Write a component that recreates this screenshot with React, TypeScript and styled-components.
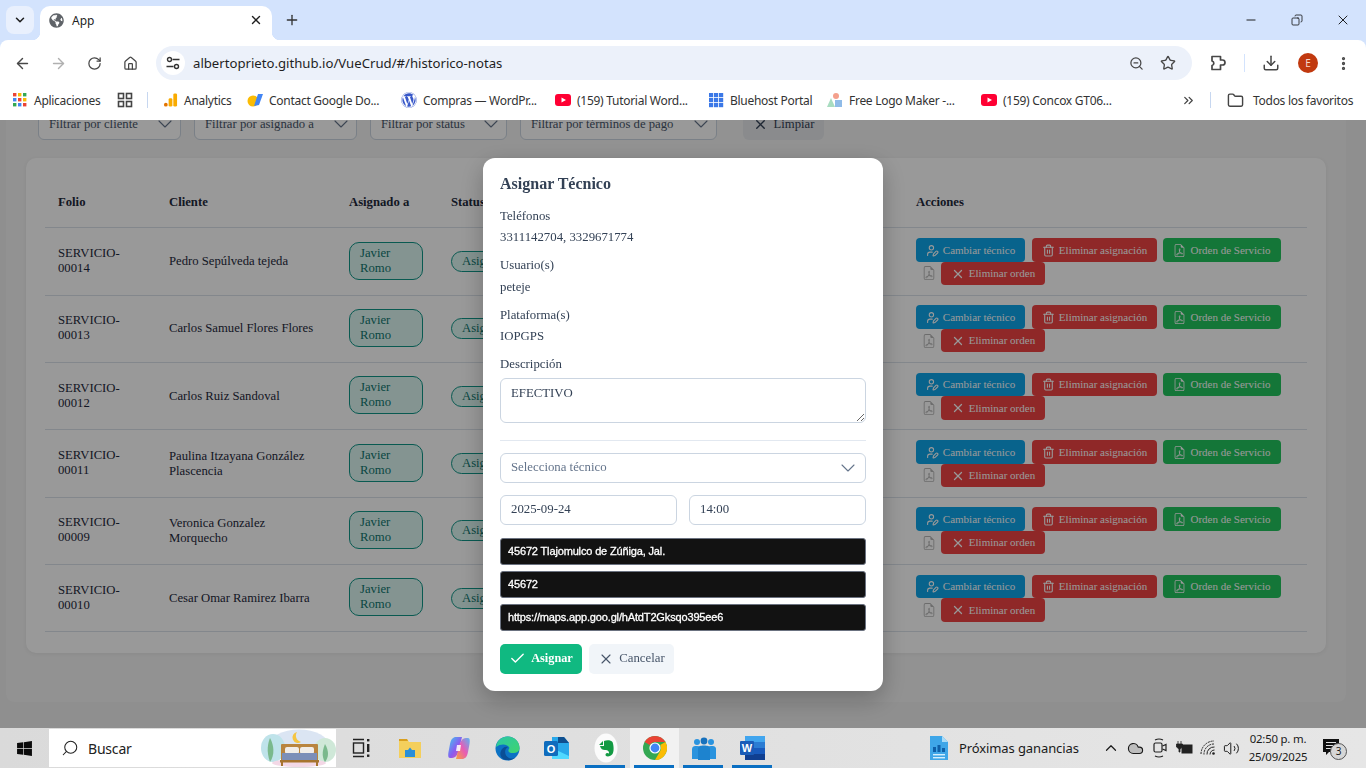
import React from "react";
import styled, { createGlobalStyle } from "styled-components";
import {
  ArrowLeft,
  ArrowRight,
  Check,
  ChevronDown,
  ChevronsRight,
  ChevronUp,
  Cloud,
  Copy,
  Download,
  EllipsisVertical,
  Folder,
  Home,
  Minus,
  Plus,
  RotateCw,
  Search,
  Star,
  Trash2,
  UserPen,
  Volume2,
  X,
  ZoomOut,
} from "lucide-react";
import { BsFileEarmarkPdf } from "react-icons/bs";
import { FaWordpress, FaGlobeAmericas, FaWindows } from "react-icons/fa";

const GlobalStyle = createGlobalStyle`
  html, body {
    margin: 0;
    padding: 0;
    overflow: hidden;
  }
  *, *:before, *:after {
    box-sizing: border-box;
  }
  body {
    font-family: "Liberation Serif", "Times New Roman", serif;
    color: #1e293b;
  }
`;

const UI_FONT = `"Noto Sans", "Open Sans", sans-serif`;

const Screen = styled.div`
  width: 1366px;
  height: 768px;
  display: flex;
  flex-direction: column;
  overflow: hidden;
  background: #d3e3fd;
`;

/* chrome: tabs */
const TabStrip = styled.div`
  height: 40px;
  flex: none;
  display: flex;
  align-items: flex-end;
  padding-left: 6px;
  font-family: ${UI_FONT};
  background: #d3e3fd;
`;

const TabMenu = styled.div`
  width: 28px;
  height: 28px;
  margin-bottom: 6px;
  border-radius: 8px;
  background: #e9f0fd;
  display: flex;
  align-items: center;
  justify-content: center;
  color: #1f1f1f;
`;

const Tab = styled.div`
  position: relative;
  width: 232px;
  height: 34px;
  margin-left: 6px;
  padding: 0 9px 6px;
  background: #fff;
  border-radius: 10px 10px 0 0;
  display: flex;
  align-items: center;
  gap: 8px;
  font-size: 12px;
  color: #1f1f1f;
  span {
    flex: 1;
  }
  &::before,
  &::after {
    content: "";
    position: absolute;
    bottom: 0;
    width: 8px;
    height: 8px;
  }
  &::before {
    left: -8px;
    background: radial-gradient(circle at 0 0, transparent 8px, #fff 8.5px);
  }
  &::after {
    right: -8px;
    background: radial-gradient(circle at 100% 0, transparent 8px, #fff 8.5px);
  }
`;

const NewTab = styled.div`
  margin: 0 0 7px 12px;
  width: 18px;
  height: 26px;
  display: flex;
  align-items: center;
  color: #333;
`;

const WindowButtons = styled.div`
  margin-left: auto;
  height: 40px;
  display: flex;
  color: #111;
`;

const WindowButton = styled.div`
  width: 46px;
  display: flex;
  align-items: center;
  justify-content: center;
`;

/* chrome: toolbar */
const Toolbar = styled.div`
  height: 45px;
  flex: none;
  display: flex;
  padding-top: 6px;
  background: #fff;
  border-radius: 8px 8px 0 0;
  font-family: ${UI_FONT};
  color: #474747;
`;

const NavButton = styled.div<{ $w: number; $muted?: boolean }>`
  width: ${(p) => p.$w}px;
  height: 34px;
  flex: none;
  display: flex;
  align-items: center;
  justify-content: center;
  color: ${(p) => (p.$muted ? "#b0b0b0" : "#474747")};
`;

const Omnibox = styled.div`
  width: 1036px;
  height: 34px;
  margin-left: 9px;
  padding-left: 5px;
  flex: none;
  border-radius: 17px;
  background: #ecf1fa;
  display: flex;
  align-items: center;
`;

const SiteInfo = styled.div`
  width: 24px;
  height: 24px;
  border-radius: 50%;
  background: #fff;
  display: flex;
  align-items: center;
  justify-content: center;
`;

const Url = styled.div`
  margin-left: 8px;
  font-size: 13.17px;
  color: #1f1f1f;
  flex: 1;
`;

const ToolSep = styled.div`
  width: 1px;
  height: 18px;
  margin: 8px 0;
  background: #d3e3fd;
  flex: none;
`;

const Avatar = styled.div`
  width: 20px;
  height: 20px;
  margin-left: 2px;
  border-radius: 50%;
  background: #c1390f;
  color: #f5d8cc;
  font-size: 10px;
  display: flex;
  align-items: center;
  justify-content: center;
  flex: none;
`;

/* chrome: bookmarks */
const Bookmarks = styled.div`
  height: 35px;
  flex: none;
  display: flex;
  align-items: center;
  padding: 0 0 5px 12px;
  background: #fff;
  font-family: ${UI_FONT};
  font-size: 12px;
  color: #333;
  letter-spacing: -0.28px;
`;

const Bookmark = styled.div<{ $w: number; $gap?: number }>`
  width: ${(p) => p.$w}px;
  flex: none;
  display: flex;
  align-items: center;
  gap: ${(p) => p.$gap ?? 6}px;
  white-space: nowrap;
  svg {
    flex: none;
  }
`;

const BookmarkSep = styled.div`
  width: 1px;
  height: 16px;
  background: #c7d7f0;
  flex: none;
`;

/* the app under the dialog */
const Page = styled.div`
  position: relative;
  flex: 1;
  overflow: hidden;
  background: #eeeeee;
  padding: 0 20px 0 6px;
`;

const Panel = styled.div`
  height: 592px;
  background: #f3f3f3;
  padding: 0 20px;
  border-radius: 0 0 8px 8px;
`;

const Filters = styled.div`
  margin-top: -10px;
  padding-left: 12px;
  height: 30px;
  display: flex;
  gap: 13px;
`;

const FilterSelect = styled.div<{ $w: number }>`
  width: ${(p) => p.$w}px;
  height: 30px;
  padding: 0 3px 2px 10px;
  border: 1px solid #cbd5e1;
  border-radius: 6px;
  background: #fff;
  display: flex;
  align-items: center;
  justify-content: space-between;
  font-size: 12.7px;
  color: #475569;
`;

const ClearButton = styled.div`
  margin-left: 13px;
  width: 81px;
  height: 30px;
  padding-bottom: 2px;
  border-radius: 6px;
  background: #e6e8ec;
  display: flex;
  align-items: center;
  justify-content: center;
  gap: 6px;
  font-size: 12.7px;
  color: #334155;
`;

const Card = styled.div`
  margin-top: 18px;
  height: 495px;
  padding: 19px;
  background: #fff;
  border-radius: 10px;
  box-shadow: 0 1px 4px rgba(0, 0, 0, 0.06);
`;

const Row = styled.div<{ $head?: boolean }>`
  display: grid;
  grid-template-columns: 111px 180px 102px 465px 1fr;
  align-items: center;
  height: ${(p) => (p.$head ? "51.4px" : "67.33px")};
  border-bottom: 1px solid #dbe2ea;
  font-size: 12.7px;
  line-height: 15px;
  font-weight: ${(p) => (p.$head ? 700 : 400)};
`;

const Cell = styled.div`
  padding: 0 13px;
`;

const FolioCell = styled(Cell)`
  margin-bottom: 1px;
`;

const TechPill = styled.div`
  width: 74px;
  margin-bottom: 1.5px;
  padding: 3px 10px;
  border: 1px solid #0f9688;
  border-radius: 10px;
  background: #dcf7f2;
  color: #0f766e;
`;

const StatusPill = styled.div`
  display: inline-block;
  padding: 2px 10px;
  border: 1px solid #0f9688;
  border-radius: 11px;
  background: #dcf7f2;
  color: #0f766e;
`;

const Actions = styled.div`
  display: flex;
  flex-wrap: wrap;
  align-items: center;
`;

const ActionButton = styled.div<{ $bg: string; $w: number; $ml?: number }>`
  width: ${(p) => p.$w}px;
  margin-left: ${(p) => p.$ml ?? 0}px;
  height: 23.5px;
  padding-top: 0.5px;
  border-radius: 4px;
  background: ${(p) => p.$bg};
  color: #fff;
  font-size: 11px;
  display: flex;
  align-items: center;
  justify-content: center;
  gap: 4px;
  white-space: nowrap;
`;

const PdfGhost = styled.div`
  width: 25px;
  height: 23.5px;
  display: flex;
  align-items: center;
  justify-content: center;
  color: #b5b5b5;
`;

/* dialog */
const Overlay = styled.div`
  position: absolute;
  inset: 0;
  background: rgba(0, 0, 0, 0.4);
  backdrop-filter: blur(0.6px);
  display: flex;
  align-items: center;
  justify-content: center;
`;

const Modal = styled.div`
  width: 400px;
  height: 533px;
  padding: 17.5px 17px 17px;
  background: #fff;
  border-radius: 12px;
  box-shadow: 0 8px 24px rgba(0, 0, 0, 0.25);
  display: flex;
  flex-direction: column;
  font-size: 12.8px;
  line-height: 15px;
  color: #334155;
`;

const Title = styled.div`
  font-size: 16px;
  line-height: 18px;
  font-weight: 700;
  margin-bottom: 16px;
`;

const Field = styled.div<{ $gap: number }>`
  margin-bottom: ${(p) => p.$gap}px;
`;

const Value = styled.div`
  margin-top: 6.33px;
`;

const Description = styled.textarea`
  display: block;
  width: 100%;
  height: 45px;
  margin-top: 6px;
  padding: 7px 10px;
  border: 1px solid #cbd5e1;
  border-radius: 6px;
  font: 12.8px/15px "Liberation Serif", serif;
  color: #334155;
  outline: none;
`;

const Divider = styled.div`
  height: 1px;
  margin: 17px 0 12px;
  background: #e2e8f0;
  flex: none;
`;

const Control = styled.div<{ $placeholder?: boolean }>`
  flex: 1;
  height: 30px;
  padding: 0 5px 0 10px;
  border: 1px solid #cbd5e1;
  border-radius: 6px;
  display: flex;
  align-items: center;
  justify-content: space-between;
  color: ${(p) => (p.$placeholder ? "#64748b" : "#334155")};
  flex-shrink: 0;
`;

const SelectRow = styled.div`
  display: flex;
  margin-bottom: 12px;
`;

const DateRow = styled.div`
  display: flex;
  gap: 12px;
  margin-bottom: 13px;
`;

const DarkField = styled.div`
  height: 27px;
  margin-bottom: 6px;
  padding: 0 7px;
  border: 1px solid #6b7280;
  border-radius: 3px;
  background: #121212;
  color: #fff;
  font: 400 11px/25px "Liberation Sans", Arial, sans-serif;
  letter-spacing: -0.15px;
  -webkit-text-stroke: 0.3px #fff;
`;

const ModalButtons = styled.div`
  display: flex;
  gap: 7px;
  margin-top: 7px;
`;

const ModalButton = styled.div<{ $primary?: boolean; $w: number }>`
  width: ${(p) => p.$w}px;
  height: 30px;
  border-radius: 5px;
  display: flex;
  align-items: center;
  justify-content: center;
  gap: 5px;
  background: ${(p) => (p.$primary ? "#10b981" : "#f1f5f9")};
  color: ${(p) => (p.$primary ? "#fff" : "#475569")};
  font-size: ${(p) => (p.$primary ? "12.3px" : "12.8px")};
  font-weight: ${(p) => (p.$primary ? 700 : 400)};
`;

/* windows taskbar */
const Taskbar = styled.div`
  height: 40px;
  flex: none;
  display: flex;
  align-items: stretch;
  background: linear-gradient(90deg, #dadada, #e6e6e6);
  font-family: ${UI_FONT};
  color: #1a1a1a;
`;

const StartButton = styled.div`
  width: 49px;
  display: flex;
  align-items: center;
  justify-content: center;
  color: #0b0b0b;
`;

const SearchBox = styled.div`
  width: 287px;
  margin: 1px 0;
  padding-left: 12px;
  background: #fff;
  display: flex;
  align-items: center;
  gap: 9px;
  font-size: 14px;
  letter-spacing: -0.2px;
  color: #222;
  span {
    flex: 1;
  }
`;

const TaskApp = styled.div<{ $active?: boolean; $open?: boolean }>`
  position: relative;
  width: 49px;
  flex: none;
  display: flex;
  align-items: center;
  justify-content: center;
  background: ${(p) => (p.$active ? "#f1f1f1" : "transparent")};
  &::after {
    content: "";
    display: ${(p) => (p.$open ? "block" : "none")};
    position: absolute;
    left: 4px;
    right: 5px;
    bottom: 0;
    height: 3px;
    background: #0a6fc2;
  }
`;

const Widget = styled.div`
  margin-left: 153px;
  width: 157px;
  display: flex;
  align-items: center;
  gap: 11px;
  font-size: 13px;
  letter-spacing: -0.1px;
  white-space: nowrap;
`;

const Tray = styled.div`
  margin-left: 12px;
  display: flex;
  align-items: center;
  color: #1a1a1a;
`;

const TrayIcon = styled.div<{ $w: number }>`
  width: ${(p) => p.$w}px;
  display: flex;
  justify-content: center;
`;

const Clock = styled.div`
  width: 60px;
  margin-left: 6px;
  font-size: 11.4px;
  line-height: 18px;
  text-align: center;
  white-space: nowrap;
  letter-spacing: -0.2px;
`;

const Notifications = styled.div`
  position: relative;
  margin-left: 15px;
  width: 18px;
  height: 18px;
`;

const NotifyBadge = styled.div`
  position: absolute;
  left: 7px;
  top: 4px;
  width: 17px;
  height: 17px;
  border-radius: 50%;
  border: 1px solid #555;
  background: #d6d6d6;
  font-size: 10px;
  line-height: 15px;
  text-align: center;
`;

const AppsGrid = () => {
  const colors = ["#ea4335", "#fbbc04", "#34a853", "#4285f4", "#ea4335", "#fbbc04", "#34a853", "#4285f4", "#ea4335"];
  return (
    <svg width="16" height="16" viewBox="0 0 16 16">
      {colors.map((c, i) => (
        <rect key={i} x={1 + (i % 3) * 5} y={1 + Math.floor(i / 3) * 5} width="3.4" height="3.4" fill={c} />
      ))}
    </svg>
  );
};

const QuadIcon = () => (
  <svg width="16" height="16" viewBox="0 0 16 16" fill="none" stroke="#444" strokeWidth="1.6">
    <rect x="1.5" y="1.5" width="5" height="5" />
    <rect x="9.5" y="1.5" width="5" height="5" />
    <rect x="1.5" y="9.5" width="5" height="5" />
    <rect x="9.5" y="9.5" width="5" height="5" />
  </svg>
);

const TuneIcon = () => (
  <svg width="14" height="14" viewBox="0 0 14 14" fill="none" stroke="#333" strokeWidth="1.4">
    <circle cx="3.5" cy="3.5" r="2" />
    <path d="M6.5 3.5 H13.5 M0.5 10.5 H7.5" />
    <circle cx="10.5" cy="10.5" r="2" />
  </svg>
);

const ExtensionIcon = () => (
  <svg width="18" height="18" viewBox="0 0 18 18" fill="none" stroke="#474747" strokeWidth="1.7" strokeLinejoin="round">
    <path d="M3 2.5 H11.5 V6 H13.5 A2.2 2.2 0 0 1 13.5 11 H11.5 V15.5 H3 V11.5 A2.3 2.3 0 0 0 3 7 Z" />
  </svg>
);

const AnalyticsIcon = () => (
  <svg width="15" height="16" viewBox="0 0 16 16">
    <rect x="11" y="1" width="4" height="14" rx="1.5" fill="#f9ab00" />
    <rect x="6" y="6" width="4" height="9" rx="1.5" fill="#f9ab00" />
    <circle cx="3" cy="13" r="2" fill="#e37400" />
  </svg>
);

const ContactIcon = () => (
  <svg width="16" height="16" viewBox="0 0 16 16">
    <circle cx="6" cy="9" r="5.5" fill="#fbbc04" />
    <path d="M7 14 L11 2 H16 L12 13 Z" fill="#4285f4" />
  </svg>
);

const YoutubeIcon = () => (
  <svg width="16" height="16" viewBox="0 0 16 16">
    <rect x="0" y="2" width="16" height="12" rx="3" fill="#ff0033" />
    <path d="M6.5 5.5 L11 8 L6.5 10.5 Z" fill="#fff" />
  </svg>
);

const BluehostIcon = () => {
  const cells = [0, 1, 2, 3, 4, 5, 6, 7, 8];
  return (
    <svg width="15" height="16" viewBox="0 0 15 16">
      {cells.map((i) => (
        <rect key={i} x={(i % 3) * 5} y={1 + Math.floor(i / 3) * 5} width="4.2" height="4.2" fill="#3b78e7" />
      ))}
    </svg>
  );
};

const LogoMakerIcon = () => (
  <svg width="16" height="16" viewBox="0 0 16 16">
    <path d="M0 15 L4 6 L8 15 Z" fill="#a8dcc0" />
    <circle cx="9" cy="4" r="3" fill="#f4a08c" />
    <rect x="8" y="8" width="7" height="7" fill="#8fbbe8" />
  </svg>
);

const BedArt = () => (
  <svg width="75" height="38" viewBox="0 0 75 38">
    <ellipse cx="38" cy="17" rx="30" ry="16.5" fill="#dbe5f3" />
    <ellipse cx="12" cy="19" rx="12" ry="14" fill="#bfe3ea" />
    <ellipse cx="64" cy="21" rx="11" ry="12" fill="#cfe8d8" />
    <ellipse cx="38" cy="34" rx="27" ry="4" fill="#f3d8e6" />
    <path d="M36 3 a5.5 5.5 0 1 0 4 10 a6.5 6.5 0 0 1 -4 -10 Z" fill="#f5c542" />
    <path d="M9 33 C5 22 7 14 9 9 C13 16 14 26 9 33 Z" fill="#7ab98c" />
    <path d="M64 33 C60 27 62 20 64 15 C68 22 68 28 64 33 Z" fill="#7ab98c" />
    <rect x="20" y="15" width="37" height="17" rx="1" fill="#b9853f" />
    <rect x="24" y="18" width="14" height="7" rx="2" fill="#f1ede8" />
    <rect x="39" y="18" width="14" height="7" rx="2" fill="#f1ede8" />
    <rect x="21" y="24" width="35" height="7" fill="#7c8fb8" />
    <rect x="19" y="31" width="39" height="2.5" fill="#a7742f" />
    <rect x="20" y="33" width="2" height="4" fill="#a7742f" />
    <rect x="55" y="33" width="2" height="4" fill="#a7742f" />
  </svg>
);

const TaskViewIcon = () => (
  <svg width="18" height="20" viewBox="0 0 18 20" fill="none" stroke="#222" strokeWidth="1.4">
    <path d="M1 1.5 H12 M1 18.5 H12" />
    <rect x="1.5" y="5" width="10" height="10" />
    <rect x="15" y="1" width="2.4" height="2.4" fill="#222" stroke="none" />
    <rect x="15" y="6" width="2.4" height="8" fill="#222" stroke="none" />
    <rect x="15" y="16.5" width="2.4" height="2.4" fill="#222" stroke="none" />
  </svg>
);

const ExplorerIcon = () => (
  <svg width="22" height="22" viewBox="0 0 22 22">
    <path d="M0 2 H8 L10 5 H22 V21 H0 Z" fill="#f4cf5c" />
    <path d="M0 2 H8 L9 4 H0 Z" fill="#d99f1e" />
    <path d="M6 20 V13 H9 L11 10.5 L13 13 H16 V20 Z" fill="#2a8fd8" />
  </svg>
);

const CopilotIcon = () => (
  <svg width="24" height="24" viewBox="0 0 24 24">
    <defs>
      <linearGradient id="cp1" x1="0" y1="0" x2="1" y2="1">
        <stop offset="0" stopColor="#3dc9f0" />
        <stop offset="0.55" stopColor="#8a5bf0" />
        <stop offset="1" stopColor="#f0559c" />
      </linearGradient>
      <linearGradient id="cp2" x1="0" y1="1" x2="1" y2="0">
        <stop offset="0" stopColor="#f7a13c" />
        <stop offset="0.5" stopColor="#e85bb5" />
        <stop offset="1" stopColor="#58b6f2" />
      </linearGradient>
    </defs>
    <path d="M9 1 H15 L12 13 C11 18 9 22 5 22 H3 C1 22 1 19 1.5 16 L3 8 C4 3 6 1 9 1 Z" fill="url(#cp1)" />
    <path d="M15 23 H9 L12 11 C13 6 15 2 19 2 H21 C23 2 23 5 22.5 8 L21 16 C20 21 18 23 15 23 Z" fill="url(#cp2)" />
    <path d="M10 9 H14 L13 15 H9 Z" fill="#fff" opacity="0.85" />
  </svg>
);

const EdgeIcon = () => (
  <svg width="25" height="25" viewBox="0 0 25 25">
    <defs>
      <linearGradient id="ed1" x1="0" y1="0" x2="1" y2="1">
        <stop offset="0" stopColor="#2bc6a8" />
        <stop offset="1" stopColor="#3fd46e" />
      </linearGradient>
    </defs>
    <circle cx="12.5" cy="12.5" r="12" fill="#0c72c4" />
    <path d="M1 11 C2 4 7 .5 12.5 .5 C19 .5 24.5 5 24.5 12 C24.5 16 21 17 18 17 C14 17 12 15 14.5 12 C13 8 6 7 1 11 Z" fill="url(#ed1)" />
    <path d="M12 24 C7 24 4 19 6 15 C7 12 10 10 13 11 C9 13 9 20 14 22 C16.5 23 19 22.5 21 21 C18.5 23.5 15.5 24.5 12 24 Z" fill="#0a4e96" />
  </svg>
);

const OutlookIcon = () => (
  <svg width="26" height="24" viewBox="0 0 26 24">
    <path d="M8 1 H20 L25 7 V20 H8 Z" fill="#28a8ea" />
    <path d="M14 1 H20 L25 7 H14 Z" fill="#0f4f8f" />
    <path d="M8 12 L25 20 V23 H8 Z" fill="#50d9ff" />
    <rect x="0" y="5" width="14" height="15" rx="1.5" fill="#0f6cbd" />
    <text x="7" y="16.5" textAnchor="middle" fontSize="11" fontWeight="700" fill="#fff" fontFamily="Liberation Sans">O</text>
  </svg>
);

const EvernoteIcon = () => (
  <svg width="24" height="30" viewBox="0 0 24 30">
    <ellipse cx="12" cy="15" rx="11.5" ry="14.5" fill="#fbfbfb" />
    <path d="M5 12 L9 8 V12 Z M6 13 H10 V8 C13 6.5 17 7 18.5 9 C20 13 20 19 18.5 21 C17 23 14 24 12 23 C10.5 21 12.5 19 15 20.5 C15.5 18 13 16.5 11 17 C8.5 17 7 16 6 13 Z" fill="#139a43" />
  </svg>
);

const ChromeIcon = () => (
  <svg width="24" height="24" viewBox="0 0 24 24">
    <circle cx="12" cy="12" r="12" fill="#34a853" />
    <path d="M12 0 A12 12 0 0 1 22.4 6 H12 A6 6 0 0 0 6.8 9 L1.6 6 A12 12 0 0 1 12 0 Z" fill="#ea4335" />
    <path d="M22.4 6 A12 12 0 0 1 12 24 L17.2 15 A6 6 0 0 0 17.2 9 Z" fill="#fbbc04" />
    <circle cx="12" cy="12" r="5.6" fill="#fff" />
    <circle cx="12" cy="12" r="4.4" fill="#4285f4" />
  </svg>
);

const PeopleIcon = () => (
  <svg width="26" height="26" viewBox="0 0 26 26">
    <circle cx="6" cy="7" r="3" fill="#2a93de" />
    <circle cx="20" cy="7" r="3" fill="#2a93de" />
    <path d="M1 24 V14 C1 11.5 3 11 6 11 C9 11 11 12 11 14 V24 Z" fill="#2a93de" />
    <path d="M15 24 V14 C15 12 17 11 20 11 C23 11 25 11.5 25 14 V24 Z" fill="#2a93de" />
    <circle cx="13" cy="6" r="3.4" fill="#1771bd" />
    <path d="M7 25 V14 C7 11 9.5 10.5 13 10.5 C16.5 10.5 19 11 19 14 V25 Z" fill="#1d83cf" />
  </svg>
);

const WordIcon = () => (
  <svg width="25" height="26" viewBox="0 0 25 26">
    <rect x="5" y="1" width="20" height="24" rx="1.5" fill="#2b7cd3" />
    <rect x="5" y="1" width="20" height="6" fill="#41a5ee" />
    <rect x="5" y="13" width="20" height="6" fill="#185abd" />
    <rect x="5" y="19" width="20" height="6" fill="#103f91" />
    <rect x="0" y="6" width="14" height="14" rx="1" fill="#1a5cb8" />
    <text x="7" y="17" textAnchor="middle" fontSize="11" fontWeight="700" fill="#fff" fontFamily="Liberation Sans">W</text>
  </svg>
);

const WidgetIcon = () => (
  <svg width="18" height="26" viewBox="0 0 18 26">
    <path d="M0 1 H12 L18 7 V25 H0 Z" fill="#3ea6e8" />
    <path d="M12 1 L18 7 H12 Z" fill="#a9dcf8" />
    <rect x="3" y="12" width="3" height="5" fill="#0e5fa8" />
    <rect x="7.5" y="10" width="3" height="7" fill="#0e5fa8" />
    <rect x="12" y="13" width="3" height="4" fill="#0e5fa8" />
    <rect x="3" y="19" width="12" height="1.4" fill="#d5effd" />
    <rect x="3" y="22" width="12" height="1.4" fill="#d5effd" />
  </svg>
);

const MeetIcon = () => (
  <svg width="14" height="22" viewBox="0 0 14 22" fill="none" stroke="#222" strokeWidth="1.2">
    <path d="M2 3 Q6 1 10 3 M2 19 Q6 21 10 19" />
    <rect x="1" y="6" width="8" height="9" rx="1.5" />
    <path d="M9.5 9 L13 7.5 V13.5 L9.5 12" />
  </svg>
);

const BatteryIcon = () => (
  <svg width="18" height="14" viewBox="0 0 18 14">
    <path d="M3 0 V3 M6 0 V3 M1.5 3 H7.5 V6 L5 8 V11 H4 V8 L1.5 6 Z" fill="#222" stroke="#222" strokeWidth="0.8" />
    <rect x="7" y="4" width="10" height="8" fill="#222" stroke="#222" />
  </svg>
);

const SignalIcon = () => (
  <svg width="16" height="16" viewBox="0 0 16 16" fill="none" stroke="#222" strokeWidth="1">
    <path d="M1 14 A13 13 0 0 1 14 1" strokeDasharray="2 0.8" />
    <path d="M4 14.5 A10 10 0 0 1 14.5 4" strokeDasharray="2 0.8" />
    <path d="M7 14.5 A7 7 0 0 1 14.5 7" />
    <path d="M10 14.5 A4.5 4.5 0 0 1 14.5 10" />
    <circle cx="13.5" cy="13.5" r="1.3" fill="#222" stroke="none" />
  </svg>
);

const filters = [
  { label: "Filtrar por cliente", w: 143 },
  { label: "Filtrar por asignado a", w: 163 },
  { label: "Filtrar por status", w: 137 },
  { label: "Filtrar por términos de pago", w: 197 },
];

const services = [
  { folio: "SERVICIO-00014", client: "Pedro Sepúlveda tejeda" },
  { folio: "SERVICIO-00013", client: "Carlos Samuel Flores Flores" },
  { folio: "SERVICIO-00012", client: "Carlos Ruiz Sandoval" },
  { folio: "SERVICIO-00011", client: "Paulina Itzayana González Plascencia" },
  { folio: "SERVICIO-00009", client: "Veronica Gonzalez Morquecho" },
  { folio: "SERVICIO-00010", client: "Cesar Omar Ramirez Ibarra" },
];

function App() {
  return (
    <Screen>
      <GlobalStyle />
      <TabStrip>
        <TabMenu>
          <ChevronDown size={14} strokeWidth={2.6} />
        </TabMenu>
        <Tab>
          <FaGlobeAmericas size={15} color="#5f6368" />
          <span>App</span>
          <X size={14} strokeWidth={2.4} />
        </Tab>
        <NewTab>
          <Plus size={16} strokeWidth={2} />
        </NewTab>
        <WindowButtons>
          <WindowButton>
            <Minus size={14} strokeWidth={1.6} />
          </WindowButton>
          <WindowButton>
            <Copy size={12} strokeWidth={1.6} style={{ transform: "scaleX(-1)" }} />
          </WindowButton>
          <WindowButton>
            <X size={16} strokeWidth={1.4} />
          </WindowButton>
        </WindowButtons>
      </TabStrip>

      <Toolbar>
        <NavButton $w={40} style={{ marginLeft: 2 }}>
          <ArrowLeft size={17} />
        </NavButton>
        <NavButton $w={32} $muted>
          <ArrowRight size={17} />
        </NavButton>
        <NavButton $w={40}>
          <RotateCw size={15} />
        </NavButton>
        <NavButton $w={33}>
          <Home size={15} />
        </NavButton>
        <Omnibox>
          <SiteInfo>
            <TuneIcon />
          </SiteInfo>
          <Url>albertoprieto.github.io/VueCrud/#/historico-notas</Url>
          <NavButton $w={32}>
            <ZoomOut size={15} />
          </NavButton>
          <NavButton $w={32} style={{ marginRight: 8 }}>
            <Star size={16} />
          </NavButton>
        </Omnibox>
        <NavButton $w={52}>
          <ExtensionIcon />
        </NavButton>
        <ToolSep />
        <NavButton $w={52}>
          <Download size={18} />
        </NavButton>
        <NavButton $w={20}>
          <Avatar>E</Avatar>
        </NavButton>
        <NavButton $w={52}>
          <EllipsisVertical size={17} strokeWidth={2.6} />
        </NavButton>
      </Toolbar>

      <Bookmarks>
        <Bookmark $w={105}>
          <AppsGrid />
          Aplicaciones
        </Bookmark>
        <Bookmark $w={30}>
          <QuadIcon />
        </Bookmark>
        <BookmarkSep />
        <Bookmark $w={15} />
        <Bookmark $w={84}>
          <AnalyticsIcon />
          Analytics
        </Bookmark>
        <Bookmark $w={154}>
          <ContactIcon />
          Contact Google Do...
        </Bookmark>
        <Bookmark $w={154}>
          <FaWordpress size={16} color="#3858c9" />
          Compras — WordPr...
        </Bookmark>
        <Bookmark $w={154}>
          <YoutubeIcon />
          (159) Tutorial Word...
        </Bookmark>
        <Bookmark $w={118}>
          <BluehostIcon />
          Bluehost Portal
        </Bookmark>
        <Bookmark $w={154}>
          <LogoMakerIcon />
          Free Logo Maker -...
        </Bookmark>
        <Bookmark $w={200}>
          <YoutubeIcon />
          (159) Concox GT06...
        </Bookmark>
        <Bookmark $w={29}>
          <ChevronsRight size={15} color="#444" />
        </Bookmark>
        <BookmarkSep />
        <Bookmark $w={16} />
        <Bookmark $w={124} $gap={9}>
          <Folder size={17} color="#444" />
          Todos los favoritos
        </Bookmark>
      </Bookmarks>

      <Page>
        <Panel>
          <Filters>
            {filters.map((filter) => (
              <FilterSelect key={filter.label} $w={filter.w}>
                {filter.label}
                <ChevronDown size={24} strokeWidth={1.1} color="#64748b" />
              </FilterSelect>
            ))}
            <ClearButton>
              <X size={15} strokeWidth={2.2} />
              Limpiar
            </ClearButton>
          </Filters>
          <Card>
            <Row $head>
              <Cell>Folio</Cell>
              <Cell>Cliente</Cell>
              <Cell>Asignado a</Cell>
              <Cell>Status</Cell>
              <Cell>Acciones</Cell>
            </Row>
            {services.map((service) => (
              <Row key={service.folio}>
                <FolioCell>{service.folio}</FolioCell>
                <Cell>{service.client}</Cell>
                <Cell>
                  <TechPill>Javier Romo</TechPill>
                </Cell>
                <Cell>
                  <StatusPill>Asignado</StatusPill>
                </Cell>
                <Cell>
                  <Actions>
                    <ActionButton $bg="#0ea5e9" $w={109}>
                      <UserPen size={13} />
                      Cambiar técnico
                    </ActionButton>
                    <ActionButton $bg="#ef4444" $w={125} $ml={7}>
                      <Trash2 size={13} />
                      Eliminar asignación
                    </ActionButton>
                    <ActionButton $bg="#22c55e" $w={118} $ml={6}>
                      <BsFileEarmarkPdf size={13} />
                      Orden de Servicio
                    </ActionButton>
                    <PdfGhost>
                      <BsFileEarmarkPdf size={14} />
                    </PdfGhost>
                    <ActionButton $bg="#ef4444" $w={104}>
                      <X size={14} strokeWidth={2.2} />
                      Eliminar orden
                    </ActionButton>
                  </Actions>
                </Cell>
              </Row>
            ))}
          </Card>
        </Panel>

        <Overlay>
          <Modal>
            <Title>Asignar Técnico</Title>
            <Field $gap={13}>
              Teléfonos
              <Value>3311142704, 3329671774</Value>
            </Field>
            <Field $gap={13}>
              Usuario(s)
              <Value>peteje</Value>
            </Field>
            <Field $gap={13}>
              Plataforma(s)
              <Value>IOPGPS</Value>
            </Field>
            <Field $gap={0}>
              Descripción
              <Description defaultValue="EFECTIVO" />
            </Field>
            <Divider />
            <SelectRow>
              <Control $placeholder>
                Selecciona técnico
                <ChevronDown size={24} strokeWidth={1.1} color="#64748b" />
              </Control>
            </SelectRow>
            <DateRow>
              <Control>2025-09-24</Control>
              <Control>14:00</Control>
            </DateRow>
            <DarkField>45672 Tlajomulco de Zúñiga, Jal.</DarkField>
            <DarkField>45672</DarkField>
            <DarkField>https://maps.app.goo.gl/hAtdT2Gksqo395ee6</DarkField>
            <ModalButtons>
              <ModalButton $primary $w={82}>
                <Check size={17} />
                Asignar
              </ModalButton>
              <ModalButton $w={85}>
                <X size={16} strokeWidth={1.7} />
                Cancelar
              </ModalButton>
            </ModalButtons>
          </Modal>
        </Overlay>
      </Page>

      <Taskbar>
        <StartButton>
          <FaWindows size={17} />
        </StartButton>
        <SearchBox>
          <Search size={18} strokeWidth={1.4} style={{ transform: "scaleX(-1)" }} />
          <span>Buscar</span>
          <BedArt />
        </SearchBox>
        <TaskApp>
          <TaskViewIcon />
        </TaskApp>
        <TaskApp>
          <ExplorerIcon />
        </TaskApp>
        <TaskApp>
          <CopilotIcon />
        </TaskApp>
        <TaskApp>
          <EdgeIcon />
        </TaskApp>
        <TaskApp>
          <OutlookIcon />
        </TaskApp>
        <TaskApp $open>
          <EvernoteIcon />
        </TaskApp>
        <TaskApp $active $open>
          <ChromeIcon />
        </TaskApp>
        <TaskApp $open>
          <PeopleIcon />
        </TaskApp>
        <TaskApp $open>
          <WordIcon />
        </TaskApp>
        <Widget>
          <WidgetIcon />
          Próximas ganancias
        </Widget>
        <Tray>
          <TrayIcon $w={24}>
            <ChevronUp size={18} strokeWidth={1.6} />
          </TrayIcon>
          <TrayIcon $w={25}>
            <Cloud size={17} strokeWidth={1.6} fill="#bdbdbd" />
          </TrayIcon>
          <TrayIcon $w={24}>
            <MeetIcon />
          </TrayIcon>
          <TrayIcon $w={24}>
            <BatteryIcon />
          </TrayIcon>
          <TrayIcon $w={24}>
            <SignalIcon />
          </TrayIcon>
          <TrayIcon $w={22}>
            <Volume2 size={17} strokeWidth={1.4} />
          </TrayIcon>
          <Clock>
            02:50 p. m.
            <br />
            25/09/2025
          </Clock>
          <Notifications>
            <svg width="16" height="18" viewBox="0 0 16 18">
              <path d="M0 0 H16 V13 H6 L3 16 V13 H0 Z" fill="#111" />
              <path d="M3 3.5 H13 M3 6.5 H13 M3 9.5 H13" stroke="#e2e2e2" strokeWidth="1" />
            </svg>
            <NotifyBadge>3</NotifyBadge>
          </Notifications>
        </Tray>
      </Taskbar>
    </Screen>
  );
}

export default App;
